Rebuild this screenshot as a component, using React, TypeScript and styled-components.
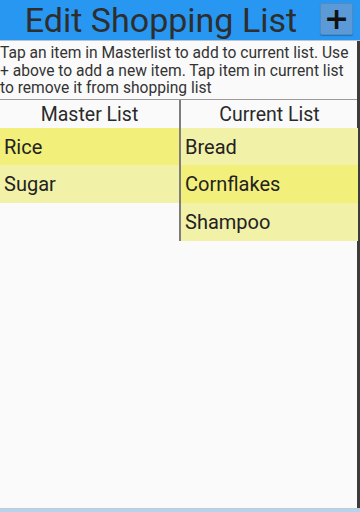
import styled, { createGlobalStyle } from 'styled-components'

const GlobalStyle = createGlobalStyle`
  html, body {
    margin: 0;
    padding: 0;
    background: #fafafa;
    font-family: Roboto, "Liberation Sans", sans-serif;
  }
`

const Screen = styled.div`
  width: 360px;
  height: 512px;
  display: flex;
  flex-direction: column;
  overflow: hidden;
  background: #fafafa;
`

const Header = styled.div`
  height: 41px;
  background: #2797f2;
  display: flex;
  align-items: center;
  border-bottom: 1px solid #b9c6d2;
  box-sizing: border-box;
`

const Title = styled.h1`
  flex: 1;
  margin: 0;
  padding-left: 12px;
  text-align: center;
  font-size: 34px;
  font-weight: 400;
  color: #2e2e2e;
  line-height: 41px;
  white-space: nowrap;
`

const AddButton = styled.button`
  width: 33px;
  height: 32px;
  margin: 0 7px 3px 10px;
  background: #5b9ad6;
  border: 1px solid #4f8cc6;
  border-radius: 2px;
  box-shadow: 0 1px 1px rgba(0, 0, 0, 0.25);
  font-family: "DejaVu Sans", sans-serif;
  font-size: 30px;
  font-weight: 700;
  line-height: 28px;
  color: #111;
  padding: 0;
`

const Body = styled.div`
  flex: 1;
  display: flex;
  flex-direction: column;
  border-right: 3px solid #3c3c3c;
`

const Hint = styled.p`
  margin: 0;
  padding: 4px 0 1px;
  font-size: 15.6px;
  line-height: 17.6px;
  color: #333;
  border-bottom: 1px solid #9a9a9a;
`

const Columns = styled.div`
  display: flex;
  align-items: flex-start;
`

const Column = styled.div<{ $divider?: boolean }>`
  flex: 0 0 ${(p) => (p.$divider ? '177px' : '179px')};
  border-left: ${(p) => (p.$divider ? '2px solid #7d7d7d' : 'none')};
`

const ColumnTitle = styled.div`
  height: 28px;
  line-height: 30px;
  text-align: center;
  font-size: 19.5px;
  color: #2a2a2a;
`

const Item = styled.div<{ $strong?: boolean }>`
  height: 37.7px;
  display: flex;
  align-items: center;
  padding-left: 4px;
  font-size: 20px;
  color: #222;
  background: ${(p) => (p.$strong ? '#f2f07a' : '#f2f1a8')};
`

const master = [
  { name: 'Rice', strong: true },
  { name: 'Sugar', strong: false },
]

const current = [
  { name: 'Bread', strong: false },
  { name: 'Cornflakes', strong: true },
  { name: 'Shampoo', strong: false },
]

const BottomBar = styled.div`
  height: 3px;
  border-top: 1px solid #c8c8c8;
  background: #b3d4ee;
`

export default function App() {
  return (
    <Screen>
      <GlobalStyle />
      <Header>
        <Title>Edit Shopping List</Title>
        <AddButton>+</AddButton>
      </Header>
      <Body>
        <Hint>
          Tap an item in Masterlist to add to current list. Use + above to add a new item. Tap item
          in current list to remove it from shopping list
        </Hint>
        <Columns>
          <Column>
            <ColumnTitle>Master List</ColumnTitle>
            {master.map((m) => (
              <Item key={m.name} $strong={m.strong}>
                {m.name}
              </Item>
            ))}
          </Column>
          <Column $divider>
            <ColumnTitle>Current List</ColumnTitle>
            {current.map((c) => (
              <Item key={c.name} $strong={c.strong}>
                {c.name}
              </Item>
            ))}
          </Column>
        </Columns>
      </Body>
      <BottomBar />
    </Screen>
  )
}
